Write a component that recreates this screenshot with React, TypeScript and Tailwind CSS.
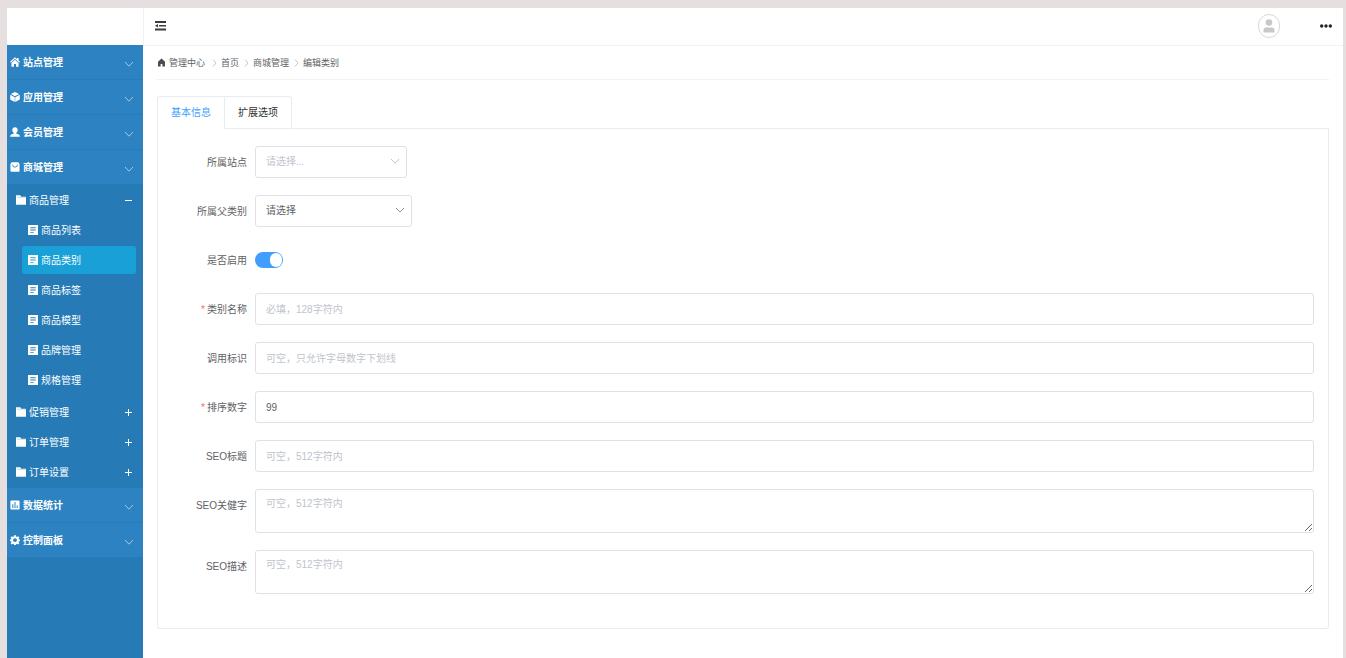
import { useState } from "react";
import type { ReactNode } from "react";

type IconName = "home" | "box" | "user" | "bag" | "chart" | "gear" | "folder" | "doc";

const icons: Record<IconName, ReactNode> = {
  home: (
    <path d="M12 0.500 0 11.500l1.800 2L12 4.300l10.200 9.200 1.800-2-3.400-3.200V2.500h-3.800v2.400L12 0.500Zm0 6L3.400 14.300V23.500h6.200V16.500h4.800v7h6.200v-9.200L12 6.500Z" />
  ),
  box: (
    <path d="M12 0 2 4.800 12 10.200l10-5.400L12 0ZM0.500 6.500v11.700L11.400 24V12.300L0.500 6.500Zm23 0L12.600 12.300V24l10.900-5.800V6.500Z" />
  ),
  user: (
    <path d="M12 0.500C8 0.500 5.500 3.300 5.500 7.300c0 2.800 1.400 5.400 3.300 6.700v1.900C4.500 16.900 0.500 18.400 0.500 21v2.500h23V21c0-2.600-4-4.100-8.300-5.100V14c1.900-1.300 3.300-3.900 3.300-6.700C18.500 3.300 16 0.500 12 0.500Z" />
  ),
  bag: (
    <path
      fillRule="evenodd"
      d="M4 0.500h16L23 5v16.500a2 2 0 0 1-2 2H3a2 2 0 0 1-2-2V5L4 0.500ZM5.500 6c0 4.500 2.600 7 6.500 7s6.500-2.500 6.500-7h-1.800c0 3.300-1.800 5.200-4.700 5.200S7.300 9.300 7.300 6H5.500Z"
    />
  ),
  chart: (
    <path
      fillRule="evenodd"
      d="M3 1h18a2 2 0 0 1 2 2v18a2 2 0 0 1-2 2H3a2 2 0 0 1-2-2V3a2 2 0 0 1 2-2Zm2.500 9v9H8v-9H5.500Zm5.300-5v14h2.400V5h-2.400Zm5.200 8v6h2.500v-6H16Z"
    />
  ),
  gear: (
    <path
      fillRule="evenodd"
      d="m9.800 0.500-.6 3.200-2 .9-2.800-1.900-3 3 1.900 2.800-.8 2-3 .6v3l3 .7.8 2-1.900 2.800 3 3 2.800-1.900 2 .9.600 3.200h4.400l.6-3.200 2-.9 2.800 1.900 3-3-1.900-2.800.8-2 3-.7v-3l-3-.6-.8-2 1.900-2.800-3-3-2.800 1.900-2-.9-.6-3.200H9.800ZM12 7.500a4.700 4.700 0 1 1 0 9.400 4.700 4.700 0 0 1 0-9.400Z"
    />
  ),
  folder: (
    <>
      <path d="M0 0.500h10.500l2 3.500H24v19.500H0z" />
      <path d="M2 5.500h22" stroke="#267bb7" strokeOpacity="0.5" strokeWidth="1.200" />
    </>
  ),
  doc: (
    <path
      fillRule="evenodd"
      d="M0 0h24v24H0V0ZM5.500 5.500v2h13v-2h-13Zm0 5.500v2h13v-2h-13Zm0 5.500v2h8v-2h-8Z"
    />
  ),
};

function Icon({ name, className = "size-[10px]" }: { name: IconName; className?: string }) {
  return (
    <svg viewBox="0 0 24 24" fill="currentColor" aria-hidden="true" className={`shrink-0 ${className}`}>
      {icons[name]}
    </svg>
  );
}

function Chevron({ className }: { className: string }) {
  return (
    <svg viewBox="0 0 10 10" fill="none" stroke="currentColor" aria-hidden="true" className={className}>
      <path d="M1 3l4 4.200L9 3" />
    </svg>
  );
}

function GroupButton({ icon, label }: { icon: IconName; label: string }) {
  return (
    <button
      type="button"
      className="flex h-[35px] w-full items-center gap-[3px] border-b border-[#287bb9] bg-[#2d83c1] pr-[9px] pl-[3px] font-bold"
    >
      <Icon name={icon} className="size-[10px]" />
      <span className="pt-[2px]">{label}</span>
      <Chevron className="mt-1 ml-auto size-[10px] text-[#a9c5da]" />
    </button>
  );
}

function FolderButton({ label, open }: { label: string; open?: boolean }) {
  return (
    <button
      type="button"
      aria-expanded={!!open}
      className="flex h-[30px] w-full items-center gap-[3px] pr-[11px] pl-[9px]"
    >
      <Icon name="folder" />
      <span className="pt-[2px]">{label}</span>
      <svg viewBox="0 0 7 7" stroke="currentColor" aria-hidden="true" className="ml-auto size-[7px]">
        <path d={open ? "M0 3.500h7" : "M0 3.500h7M3.500 0v7"} />
      </svg>
    </button>
  );
}

const productLinks = ["商品列表", "商品类别", "商品标签", "商品模型", "品牌管理", "规格管理"];

function Sidebar() {
  const [active, setActive] = useState("商品类别");

  return (
    <aside className="flex w-[136px] shrink-0 flex-col bg-[#267bb7] text-white">
      <div className="h-[37px] bg-white" />
      <nav>
        <GroupButton icon="home" label="站点管理" />
        <GroupButton icon="box" label="应用管理" />
        <GroupButton icon="user" label="会员管理" />
        <GroupButton icon="bag" label="商城管理" />
        <div className="pb-px">
          <FolderButton label="商品管理" open />
          <ul className="pr-[7px] pb-[2px] pl-[15px]">
            {productLinks.map((label) => (
              <li key={label} className="py-px">
                <a
                  href="#"
                  onClick={() => setActive(label)}
                  className={`flex h-7 items-center gap-[3px] rounded-[3px] pl-[6px] ${
                    active === label ? "bg-[#18a0d7]" : ""
                  }`}
                >
                  <Icon name="doc" />
                  <span className="pt-[2px]">{label}</span>
                </a>
              </li>
            ))}
          </ul>
          <FolderButton label="促销管理" />
          <FolderButton label="订单管理" />
          <FolderButton label="订单设置" />
        </div>
        <GroupButton icon="chart" label="数据统计" />
        <GroupButton icon="gear" label="控制面板" />
      </nav>
    </aside>
  );
}

function TopBar() {
  return (
    <header className="flex h-[38px] items-center border-b border-l border-[#f2f2f4] pr-[11px] pb-[2px] pl-[11px]">
      <button type="button" aria-label="菜单">
        <svg viewBox="0 0 11 11" fill="#3c3c3c" aria-hidden="true" className="size-[11px]">
          <path d="M0 1h11v2H0zM4 5h7v1.500H4zM0 8.500h11v2H0zM0 5.700l3-1.700v3.400z" />
        </svg>
      </button>
      <span className="ml-auto flex h-6 w-[22px] items-center justify-center rounded-full border border-[#d9d9d9]">
        <svg viewBox="0 0 12 14" fill="#c8c8c8" aria-hidden="true" className="h-[14px] w-3">
          <circle cx="6" cy="3.500" r="3.300" />
          <path d="M0.500 13.500V11a2.500 2.500 0 0 1 2.500-2.500h6a2.500 2.500 0 0 1 2.500 2.500v2.500z" />
        </svg>
      </span>
      <button type="button" aria-label="更多" className="ml-10">
        <svg viewBox="0 0 12 4" fill="#222" aria-hidden="true" className="h-1 w-3">
          <circle cx="1.700" cy="2" r="1.700" />
          <circle cx="6" cy="2" r="1.700" />
          <circle cx="10.300" cy="2" r="1.700" />
        </svg>
      </button>
    </header>
  );
}

function Separator() {
  return (
    <svg viewBox="0 0 5 8" fill="none" stroke="#c0c4cc" aria-hidden="true" className="mr-[4px] ml-[5px] h-2 w-[5px]">
      <path d="M1 0.500l3 3.500-3 3.500" />
    </svg>
  );
}

function Breadcrumb() {
  return (
    <nav className="flex h-[34px] items-center border-b border-[#f2f2f4] text-[9px] text-[#606266]">
      <a href="#" className="mr-[2px] flex items-center gap-[3px]">
        <svg viewBox="0 0 9 9" fill="#4a4c50" aria-hidden="true" className="size-[9px]">
          <path d="M4.500 0.500 1 3.700V8.500h2.600V6h1.800v2.500H8V3.700z" />
        </svg>
        管理中心
      </a>
      <Separator />
      <a href="#">首页</a>
      <Separator />
      <a href="#">商城管理</a>
      <Separator />
      <span>编辑类别</span>
    </nav>
  );
}

type FieldProps = { id: string; label: string; required?: boolean; children: ReactNode };

function Field({ id, label, required, children }: FieldProps) {
  return (
    <div className="flex items-start gap-2">
      <label htmlFor={id} className="h-8 w-[75px] shrink-0 text-right leading-[34px]">
        {required && <span className="mr-[2px] text-[#f56c6c]">*</span>}
        {label}
      </label>
      {children}
    </div>
  );
}

const control =
  "block w-full rounded-[3px] border border-[#dfe1e7] bg-white px-[10px] text-[#606266] outline-none placeholder:text-[#c0c4cc] focus:border-[#409eff]";

type TextFieldProps = Omit<FieldProps, "children"> & { placeholder?: string; defaultValue?: string };

function TextField({ id, label, required, placeholder, defaultValue }: TextFieldProps) {
  return (
    <Field id={id} label={label} required={required}>
      <input id={id} type="text" placeholder={placeholder} defaultValue={defaultValue} className={`${control} h-8`} />
    </Field>
  );
}

function TextArea({ id, label }: { id: string; label: string }) {
  return (
    <Field id={id} label={label}>
      <textarea id={id} placeholder="可空，512字符内" className={`${control} h-11 resize-y py-[6px] leading-4`} />
    </Field>
  );
}

function CategoryForm() {
  return (
    <form className="flex flex-col gap-[17px] rounded-b-[3px] border border-t-0 border-[#e9ebf1] px-[14px] pt-[17px] pb-[34px] text-[#606266]">
      <Field id="site" label="所属站点">
        <div className="relative w-[152px]">
          <select id="site" className={`${control} h-8 appearance-none text-[#c0c4cc]!`}>
            <option>请选择...</option>
          </select>
          <Chevron className="pointer-events-none absolute top-[10px] right-[7px] size-[10px] text-[#c0c4cc]" />
        </div>
      </Field>
      <Field id="parent" label="所属父类别">
        <div className="relative w-[157px]">
          <select id="parent" className={`${control} h-8 appearance-none`}>
            <option>请选择</option>
          </select>
          <Chevron className="pointer-events-none absolute top-[10px] right-[7px] size-[10px] text-[#909399]" />
        </div>
      </Field>
      <Field id="enabled" label="是否启用">
        <div className="flex h-8 items-center">
          <input
            id="enabled"
            type="checkbox"
            role="switch"
            defaultChecked
            className="flex h-4 w-7 cursor-pointer appearance-none items-center rounded-full bg-[#c0c4cc] px-px before:h-[14px] before:w-3 before:rounded-full before:bg-white checked:justify-end checked:bg-[#409eff]"
          />
        </div>
      </Field>
      <TextField id="name" label="类别名称" required placeholder="必填，128字符内" />
      <TextField id="call" label="调用标识" placeholder="可空，只允许字母数字下划线" />
      <TextField id="sort" label="排序数字" required defaultValue="99" />
      <TextField id="seo-title" label="SEO标题" placeholder="可空，512字符内" />
      <TextArea id="seo-keyword" label="SEO关健字" />
      <TextArea id="seo-description" label="SEO描述" />
    </form>
  );
}

export default function App() {
  return (
    <div className="flex min-h-screen bg-[#e5dfdf] pt-2 pr-[3px] pl-[7px] font-['Liberation_Sans','Noto_Sans_CJK_SC',sans-serif] text-[10px] leading-4">
      <Sidebar />
      <main className="min-w-0 grow bg-white">
        <TopBar />
        <div className="px-[14px]">
          <Breadcrumb />
          <div role="tablist" className="mt-4 flex h-[33px]">
            <button
              type="button"
              role="tab"
              aria-selected="true"
              className="rounded-tl-[3px] border-t border-l border-[#e9ebf1] px-[13px] text-[#409eff]"
            >
              基本信息
            </button>
            <button
              type="button"
              role="tab"
              aria-selected="false"
              className="rounded-tr-[3px] border border-[#e9ebf1] px-[13px] text-[#303133]"
            >
              扩展选项
            </button>
            <div className="grow border-b border-[#e9ebf1]" />
          </div>
          <CategoryForm />
        </div>
      </main>
    </div>
  );
}
